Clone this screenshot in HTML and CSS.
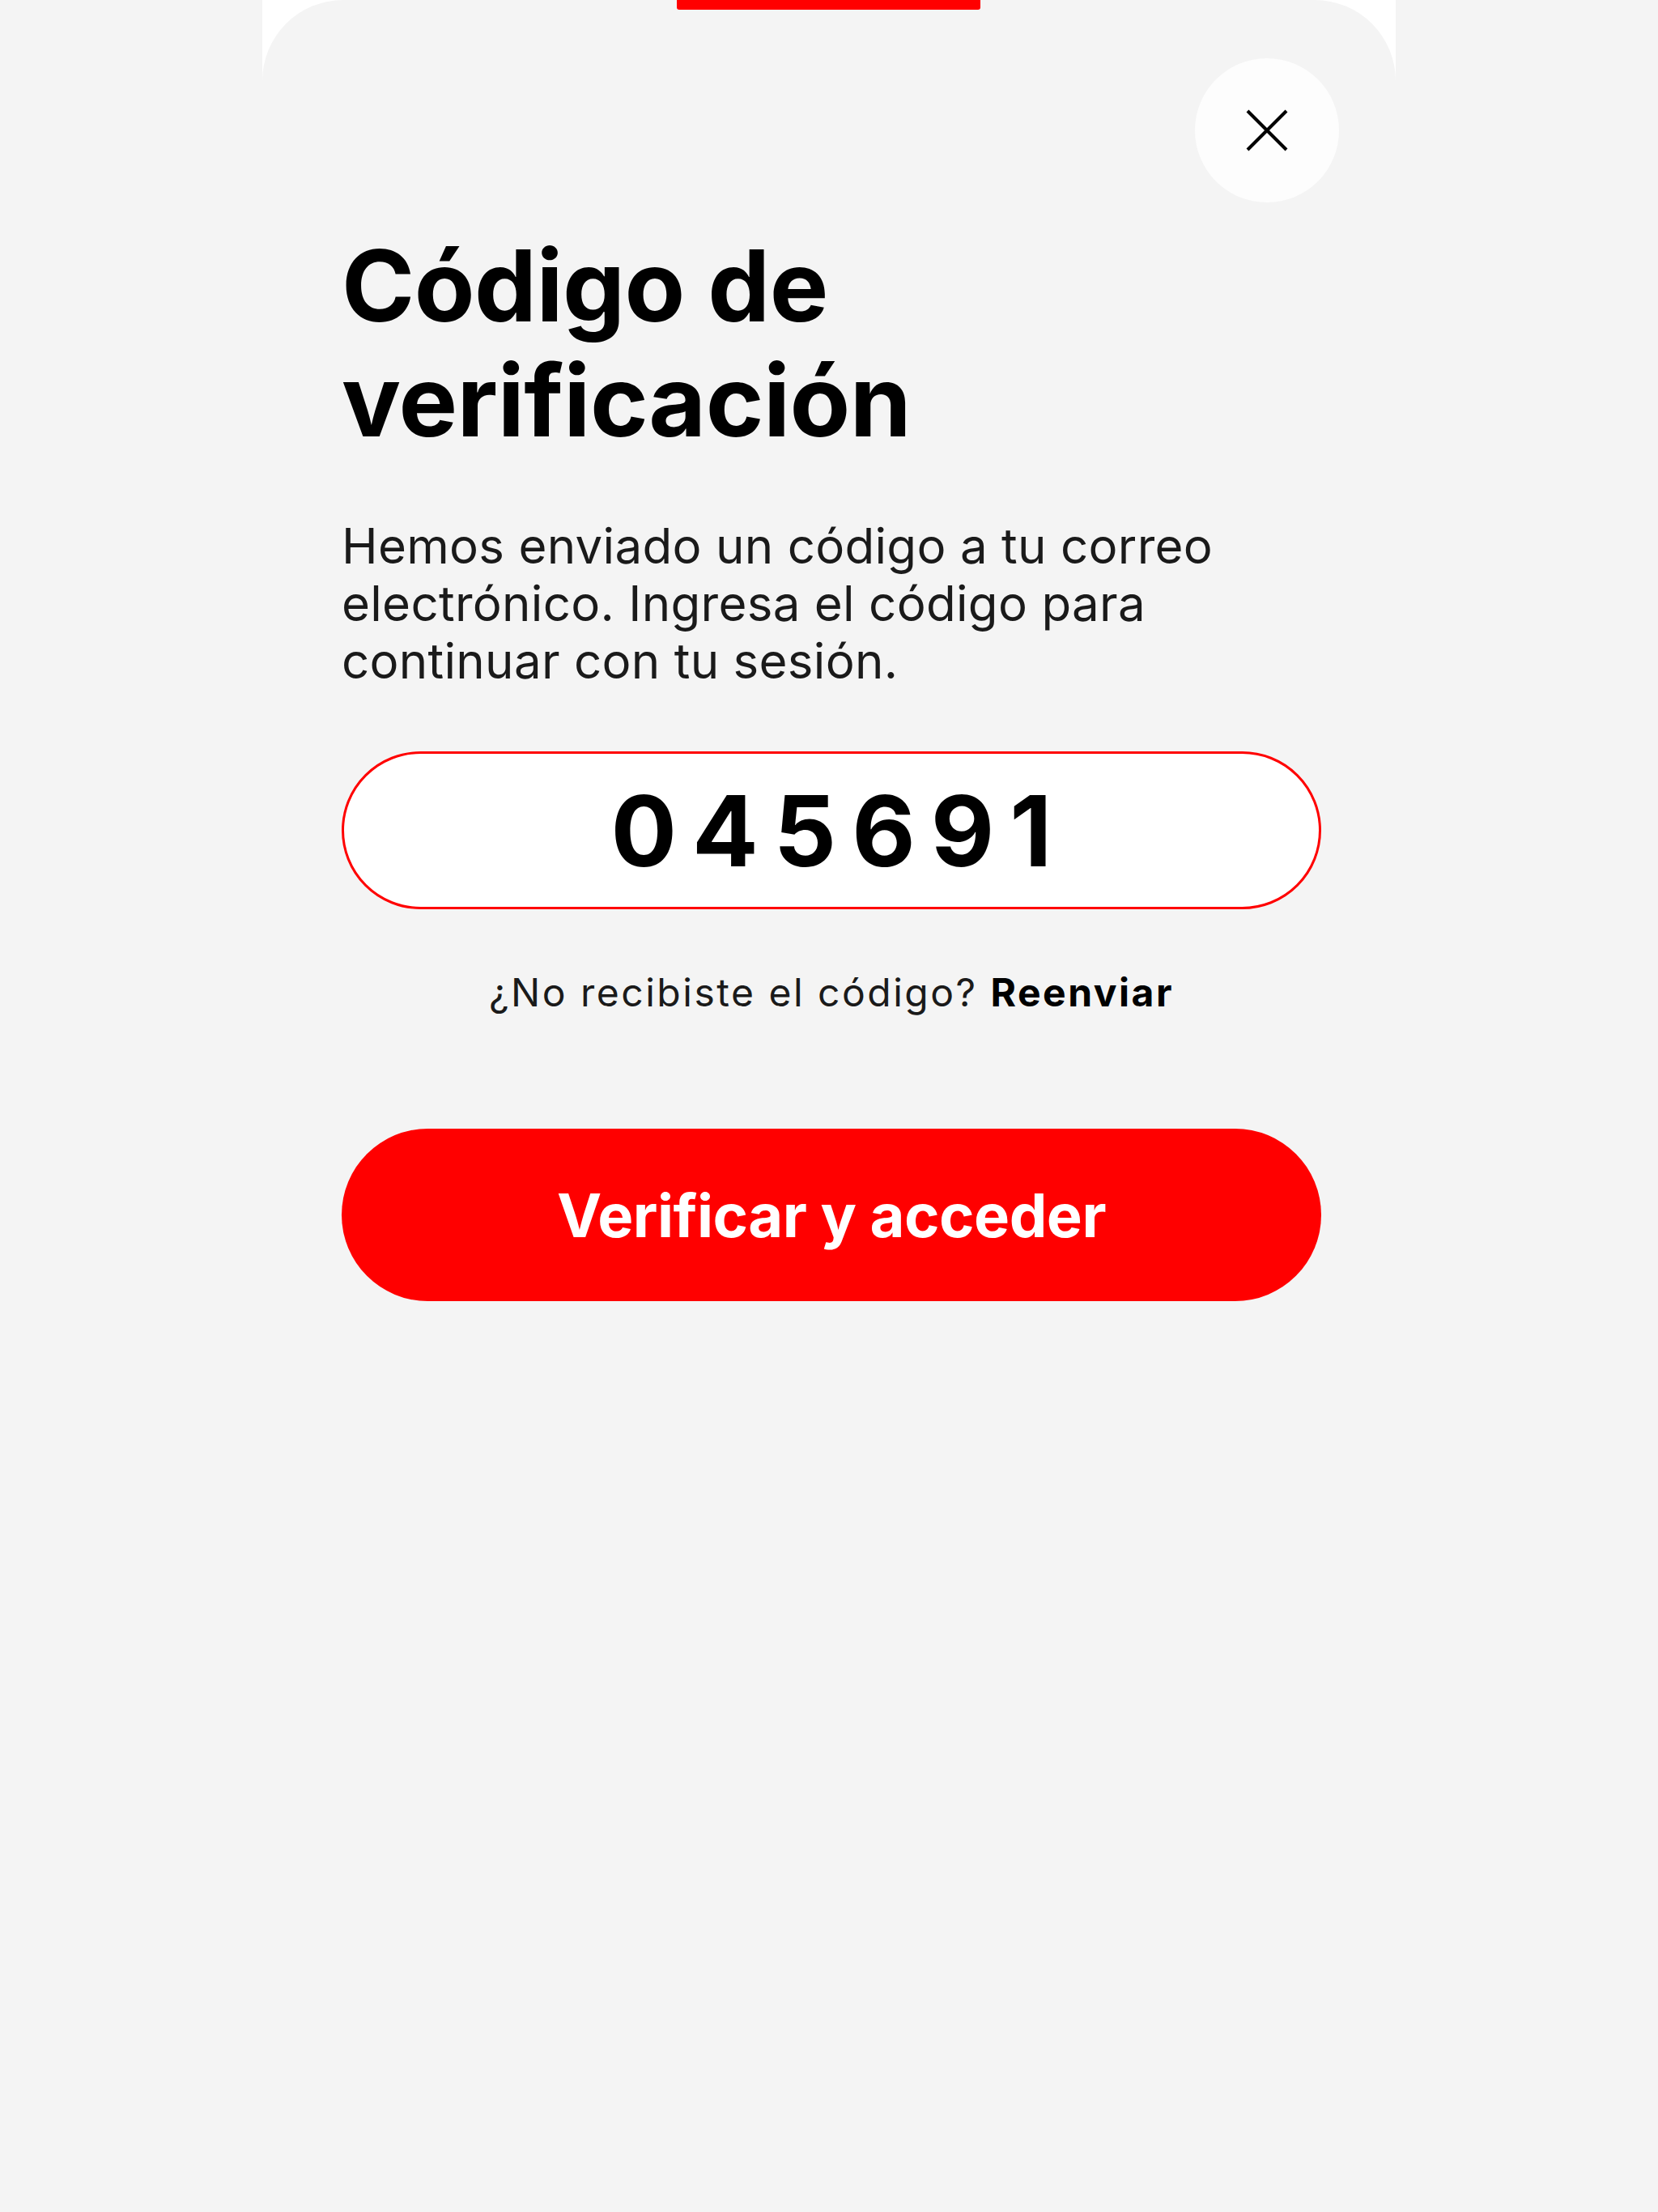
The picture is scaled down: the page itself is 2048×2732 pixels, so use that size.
FILE: index.html
```html
<!DOCTYPE html>
<html lang="es">
<head>
<meta charset="utf-8">
<title>Código de verificación</title>
<link rel="stylesheet" href="styles.css">
</head>
<body>
<div class="frame">
  <section class="sheet">
    <div class="handle"></div>
    <div class="top-row">
      <button class="close" aria-label="Cerrar">
        <svg width="52" height="52" viewBox="0 0 52 52" fill="none" stroke="#000" stroke-width="4" stroke-linecap="butt">
          <line x1="2" y1="2" x2="50" y2="50"/>
          <line x1="50" y1="2" x2="2" y2="50"/>
        </svg>
      </button>
    </div>
    <div class="content">
      <h1 class="title">Código de<br>verificación</h1>
      <p class="lead">Hemos enviado un código a tu correo electrónico. Ingresa el código para continuar con tu sesión.</p>
      <div class="code-field">045691</div>
      <p class="resend">¿No recibiste el código? <strong>Reenviar</strong></p>
      <button class="primary">Verificar y acceder</button>
    </div>
  </section>
</div>
</body>
</html>
```
FILE: styles.css
```css
html, body {
  margin: 0;
  padding: 0;
  background: #f4f4f4;
}
body {
  font-family: "Inter", "Liberation Sans", sans-serif;
  color: #111;
  min-height: 2732px;
}
.frame {
  width: 1400px;
  margin: 0 auto;
  background: #ffffff;
  min-height: 2732px;
}
.sheet {
  position: relative;
  background: #f4f4f4;
  border-radius: 100px 100px 0 0;
  min-height: 2732px;
  box-sizing: border-box;
  padding-top: 72px;
}
.handle {
  position: absolute;
  top: 0;
  left: 50%;
  width: 375px;
  height: 12px;
  margin-left: -188px;
  background: #ff0000;
  border-radius: 0 0 3px 3px;
}
.top-row {
  display: flex;
  justify-content: flex-end;
  padding-right: 70px;
}
.close {
  width: 178px;
  height: 178px;
  border-radius: 50%;
  border: none;
  background: #fdfdfd;
  display: flex;
  align-items: center;
  justify-content: center;
  padding: 0;
}
.content {
  width: 1210px;
  padding-left: 98px;
  display: flex;
  flex-direction: column;
}
.title {
  margin: 32px 0 0;
  font-size: 122px;
  line-height: 142px;
  font-weight: 700;
  letter-spacing: -0.5px;
  color: #000;
}
.lead {
  margin: 73px 0 0;
  font-size: 60px;
  line-height: 71px;
  font-weight: 400;
  letter-spacing: 0.3px;
  color: #1a1a1a;
  width: 1150px;
}
.code-field {
  margin-top: 76px;
  height: 195px;
  box-sizing: border-box;
  background: #fff;
  border: 3px solid #ff0000;
  border-radius: 98px;
  display: flex;
  align-items: center;
  justify-content: center;
  font-size: 121px;
  font-weight: 700;
  letter-spacing: 19px;
  padding-left: 19px;
  color: #000;
}
.resend {
  margin: 75px 0 0;
  text-align: center;
  font-size: 48px;
  line-height: 56px;
  letter-spacing: 2.5px;
  color: #1a1a1a;
}
.resend strong {
  font-weight: 700;
  color: #000;
}
.primary {
  margin-top: 140px;
  height: 213px;
  border: none;
  border-radius: 107px;
  background: #ff0000;
  color: #fff;
  font-family: "Inter", "Liberation Sans", sans-serif;
  font-size: 74px;
  font-weight: 700;
  letter-spacing: -0.5px;
}
```
